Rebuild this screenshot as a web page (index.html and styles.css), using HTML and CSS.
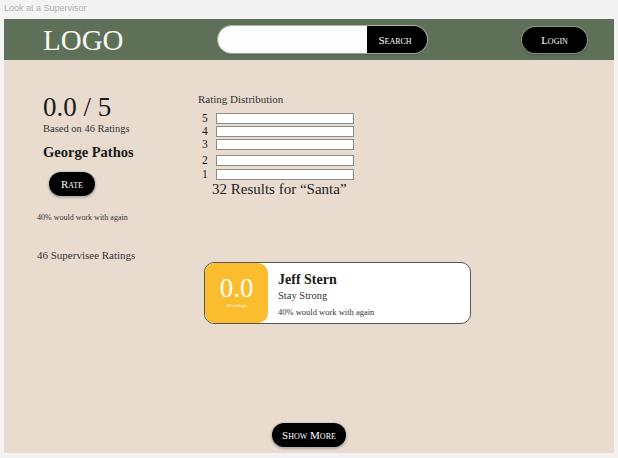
FILE: index.html
```html
<!DOCTYPE html>
<html>
<head>
<meta charset="utf-8">
<title>Look at a Supervisor</title>
<link rel="stylesheet" href="styles.css">
</head>
<body>
<div class="tab-title">Look at a Supervisor</div>
<div class="frame">
  <header class="topbar">
    <div class="logo">LOGO</div>
    <form class="search">
      <input class="search-input" type="text">
      <button class="search-btn" type="button">Search</button>
    </form>
    <button class="pill login" type="button">Login</button>
  </header>
  <main class="content">
    <section class="left">
      <div class="summary">
        <div class="score">0.0 / 5</div>
        <div class="based">Based on 46 Ratings</div>
        <div class="name">George Pathos</div>
        <button class="pill rate" type="button">Rate</button>
      </div>
      <div class="again">40% would work with again</div>
      <div class="count">46 Supervisee Ratings</div>
    </section>
    <section class="right">
      <div class="dist-title">Rating Distribution</div>
      <div class="dist">
        <div class="row r5"><span class="lbl">5</span><span class="bar"></span></div>
        <div class="row r4"><span class="lbl">4</span><span class="bar"></span></div>
        <div class="row r3"><span class="lbl">3</span><span class="bar"></span></div>
        <div class="row r2"><span class="lbl">2</span><span class="bar"></span></div>
        <div class="row r1"><span class="lbl">1</span><span class="bar"></span></div>
      </div>
      <div class="results">32 Results for “Santa”</div>
      <div class="card">
        <div class="card-score">
          <div class="card-num">0.0</div>
          <div class="card-sub">46 ratings</div>
        </div>
        <div class="card-body">
          <div class="card-name">Jeff Stern</div>
          <div class="card-dept">Stay Strong</div>
          <div class="card-again">40% would work with again</div>
        </div>
      </div>
    </section>
  </main>
  <footer class="foot">
    <button class="pill more" type="button">Show More</button>
  </footer>
</div>
</body>
</html>
```

FILE: styles.css
```css
* { box-sizing: border-box; }
html, body { margin: 0; padding: 0; }
body {
  background: #f3f3f3;
  width: 618px;
  height: 458px;
  overflow: hidden;
  font-family: "Liberation Serif", "Times New Roman", serif;
  color: #1a1a1a;
}
.tab-title {
  height: 19px;
  padding: 3px 0 0 4px;
  font-family: "Liberation Sans", Arial, sans-serif;
  font-size: 9px;
  color: #b0b0b0;
}
.frame {
  margin-left: 4px;
  width: 610px;
  height: 434px;
  display: flex;
  flex-direction: column;
  background: #e9dccf;
}
.topbar {
  height: 41px;
  background: #5e7158;
  display: flex;
  align-items: center;
  padding: 0 27px 0 39px;
}
.logo {
  color: #f7f7f2;
  font-size: 29px;
  line-height: 1;
  width: 82px;
  padding-top: 1px;
}
.search {
  margin: 0 0 0 93px;
  display: flex;
  height: 27px;
  border-radius: 14px;
  box-shadow: 0 0 0 1px rgba(220,220,220,0.6), 0 1px 2px rgba(0,0,0,0.35);
  overflow: hidden;
}
.search-input {
  width: 149px;
  height: 27px;
  border: none;
  margin: 0;
  padding: 0 10px;
  background: #fdfdfd;
  outline: none;
}
.search-btn {
  width: 60px;
  height: 27px;
  border: none;
  margin: 0;
  background: #000;
  color: #fff;
  font-family: "Liberation Serif", serif;
  font-variant: small-caps;
  font-size: 11px;
  padding: 0 4px 0 0;
}
.pill {
  background: #000;
  color: #fff;
  border: none;
  border-radius: 14px;
  font-family: "Liberation Serif", serif;
  font-variant: small-caps;
  font-size: 11px;
  box-shadow: 0 0 0 1px rgba(200,200,200,0.5), 0 1px 3px rgba(0,0,0,0.45);
  padding: 0;
}
.login {
  margin-left: auto;
  width: 65px;
  height: 26px;
}
.content {
  flex: 1;
  display: flex;
}
.left {
  width: 194px;
  padding: 34px 0 0 33px;
}
.summary { padding-left: 6px; }
.score {
  font-size: 27px;
  line-height: 27px;
}
.based {
  font-size: 10.5px;
  line-height: 12px;
  color: #333;
  margin-top: 2px;
}
.name {
  font-size: 14.5px;
  font-weight: bold;
  line-height: 18px;
  margin-top: 8px;
}
.rate {
  display: block;
  margin: 11px 0 0 6px;
  width: 46px;
  height: 24px;
}
.again {
  font-size: 8px;
  line-height: 10px;
  color: #333;
  margin-top: 17px;
}
.count {
  font-size: 11px;
  line-height: 12px;
  color: #333;
  margin-top: 26px;
}
.right {
  flex: 1;
  padding-top: 33px;
}
.dist-title {
  font-size: 11px;
  line-height: 12px;
  color: #333;
}
.dist { padding-left: 4px; margin-top: 8px; }
.row {
  display: flex;
  align-items: center;
  height: 11px;
}
.r4 { margin-top: 2px; }
.r3 { margin-top: 2px; }
.r2 { margin-top: 5px; }
.r1 { margin-top: 3px; }
.lbl {
  width: 14px;
  font-size: 11.5px;
  line-height: 11px;
}
.bar {
  width: 138px;
  height: 11px;
  background: #fff;
  border: 1px solid #8c8c8c;
}
.results {
  font-size: 15px;
  line-height: 14px;
  margin: 2px 0 0 14px;
  color: #222;
}
.card {
  margin: 66px 0 0 6px;
  width: 267px;
  height: 62px;
  border: 1px solid #555;
  border-radius: 10px;
  background: #fff;
  overflow: hidden;
  display: flex;
}
.card-score {
  width: 63px;
  background: #fbbd2d;
  color: #fff;
  border-radius: 9px 10px 10px 9px;
  display: flex;
  flex-direction: column;
  align-items: center;
  padding-top: 12px;
}
.card-num {
  font-size: 27px;
  line-height: 27px;
}
.card-sub {
  font-size: 5px;
  line-height: 6px;
  margin-top: 1px;
}
.card-body {
  padding: 8px 0 0 10px;
}
.card-name {
  font-size: 14px;
  font-weight: bold;
  line-height: 17px;
}
.card-dept {
  font-size: 10.5px;
  line-height: 12px;
  margin-top: 2px;
  color: #333;
}
.card-again {
  font-size: 8.5px;
  line-height: 10px;
  margin-top: 5px;
  color: #333;
}
.foot {
  display: flex;
  justify-content: center;
  padding-bottom: 6px;
}
.more {
  width: 74px;
  height: 24px;
}
```
